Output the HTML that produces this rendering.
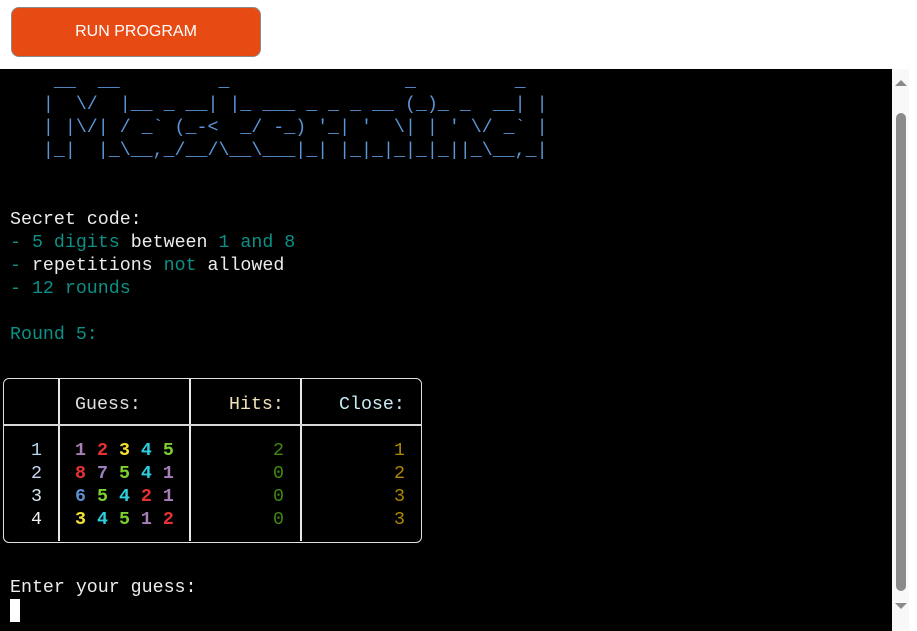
<!DOCTYPE html>
<html><head><meta charset="utf-8"><style>
html,body{margin:0;padding:0;width:917px;height:631px;overflow:hidden;background:#fff;}
.btn{position:absolute;left:11px;top:7px;width:248px;height:48px;background:#e84a14;border:1px solid #8a8a8a;border-radius:8px;color:#fff;font:16px "Liberation Sans",Arial,sans-serif;text-align:center;line-height:48px;box-sizing:content-box;}
.term{position:absolute;left:0;top:69px;width:892px;height:562px;background:#000;overflow:hidden;}
.in{position:absolute;left:0;top:3px;width:892px;height:562px;}
.l{position:absolute;left:10px;height:23px;line-height:23px;font:18.3px "Liberation Mono",monospace;white-space:pre;color:#ececec;}
.t{color:#0c8f86}
.art{color:#5b96d6}
.sb{position:absolute;left:892px;top:69px;width:17px;height:562px;background:#f8f8f8;}
.thumb{position:absolute;left:4px;top:44px;width:10px;height:478px;background:#8a8a8a;border-radius:5px;}
.v{position:absolute;width:2px;background:#e8e8e8;top:310px;height:162px;}
.d{position:absolute;font:bold 18.3px "Liberation Mono",monospace;line-height:23px;height:23px;}
.n{position:absolute;font:18.3px "Liberation Mono",monospace;line-height:23px;height:23px;white-space:pre;}
</style></head><body>
<div class="btn">RUN PROGRAM</div>
<div class="term">
<div class="l art" style="top:3px">    __  __         _                _         _ </div>
<div class="l art" style="top:26px">   |  \/  |__ _ __| |_ ___ _ _ _ __ (_)_ _  __| |</div>
<div class="l art" style="top:49px">   | |\/| / _` (_-&lt;  _/ -_) '_| '  \| | ' \/ _` |</div>
<div class="l art" style="top:72px">   |_|  |_\__,_/__/\__\___|_| |_|_|_|_|_||_\__,_|</div>
<div class="l" style="top:141px">Secret code:</div>
<div class="l" style="top:164px"><span class="t">- 5 digits</span> between <span class="t">1 and 8</span></div>
<div class="l" style="top:187px"><span class="t">-</span> repetitions <span class="t">not</span> allowed</div>
<div class="l t" style="top:210px">- 12 rounds</div>
<div class="l t" style="top:256px">Round 5:</div>
<!-- table -->
<div style="position:absolute;left:3px;top:309px;width:417px;height:163px;border:1px solid #e0e0e0;border-radius:6px;"></div>
<div class="v" style="left:58px"></div>
<div class="v" style="left:189px"></div>
<div class="v" style="left:300px"></div>
<div style="position:absolute;left:3px;top:355px;width:419px;height:2px;background:#d8d8d8"></div>
<div class="n" style="left:75px;top:325px;color:#e0e0e0">Guess:</div>
<div class="n" style="left:229px;top:325px;color:#f0e2b8">Hits:</div>
<div class="n" style="left:339px;top:325px;color:#c8ecf4">Close:</div>

<div class="n" style="left:31px;top:371px;color:#b8d8f0">1</div>
<div class="n" style="left:31px;top:394px;color:#c8d8f0">2</div>
<div class="n" style="left:31px;top:417px;color:#d8e8f0">3</div>
<div class="n" style="left:31px;top:440px;color:#f0f0f0">4</div>

<div class="d" style="left:75px;top:371px"><span style="color:#a67fb6">1</span> <span style="color:#e83232">2</span> <span style="color:#f2e030">3</span> <span style="color:#2ed0e0">4</span> <span style="color:#7ccf2e">5</span></div>
<div class="d" style="left:75px;top:394px"><span style="color:#e83232">8</span> <span style="color:#9a80c0">7</span> <span style="color:#7ccf2e">5</span> <span style="color:#2ed0e0">4</span> <span style="color:#a67fb6">1</span></div>
<div class="d" style="left:75px;top:417px"><span style="color:#5a8fd0">6</span> <span style="color:#7ccf2e">5</span> <span style="color:#2ed0e0">4</span> <span style="color:#e83232">2</span> <span style="color:#a67fb6">1</span></div>
<div class="d" style="left:75px;top:440px"><span style="color:#f2e030">3</span> <span style="color:#2ed0e0">4</span> <span style="color:#7ccf2e">5</span> <span style="color:#a67fb6">1</span> <span style="color:#e83232">2</span></div>

<div class="n" style="left:273px;top:371px;color:#3f8a10">2</div>
<div class="n" style="left:273px;top:394px;color:#3f8a10">0</div>
<div class="n" style="left:273px;top:417px;color:#3f8a10">0</div>
<div class="n" style="left:273px;top:440px;color:#3f8a10">0</div>
<div class="n" style="left:394px;top:371px;color:#b08800">1</div>
<div class="n" style="left:394px;top:394px;color:#b08800">2</div>
<div class="n" style="left:394px;top:417px;color:#b08800">3</div>
<div class="n" style="left:394px;top:440px;color:#b08800">3</div>

<div class="l" style="top:509px">Enter your guess:</div>
<div style="position:absolute;left:10px;top:530px;width:10px;height:23px;background:#fff"></div>
</div>
<div class="sb">
<div style="position:absolute;left:3px;top:11px;width:0;height:0;border-left:6px solid transparent;border-right:6px solid transparent;border-bottom:6px solid #8a8a8a"></div>
<div class="thumb"></div>
<div style="position:absolute;left:3px;top:534px;width:0;height:0;border-left:6px solid transparent;border-right:6px solid transparent;border-top:6px solid #8a8a8a"></div>
</div>
</body></html>
